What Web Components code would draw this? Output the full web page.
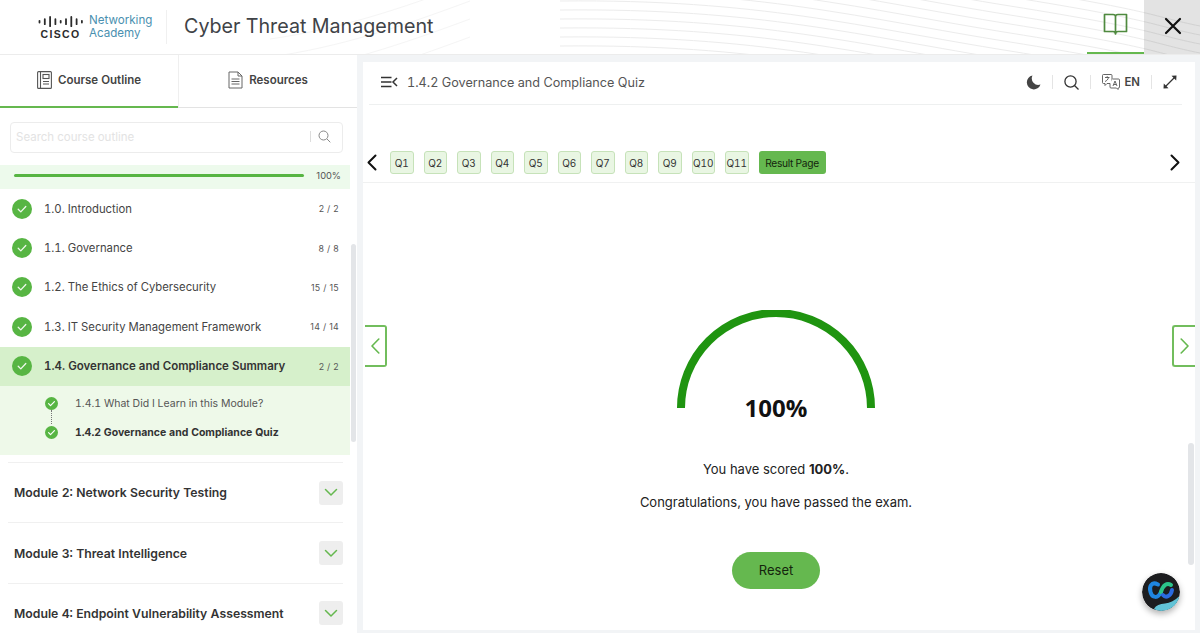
<!DOCTYPE html>
<html lang="en">
<head>
<meta charset="utf-8">
<title>Cyber Threat Management</title>
<style>
  html, body { margin: 0; height: 100%; overflow: hidden; }
  body { font-family: Inter, "Liberation Sans", sans-serif; font-variant-numeric: tabular-nums; background: #f2f4f6; color: #333; }
  .shell { display: flex; flex-direction: column; height: 633px; }
  .content { display: flex; flex: 1; min-height: 0; }
</style>
</head>
<body>
<div class="shell">
  <app-header title="Cyber Threat Management"></app-header>
  <div class="content">
    <course-sidebar>
      <outline-item label="1.0. Introduction" count="2 / 2"></outline-item>
      <outline-item label="1.1. Governance" count="8 / 8"></outline-item>
      <outline-item label="1.2. The Ethics of Cybersecurity" count="15 / 15"></outline-item>
      <outline-item label="1.3. IT Security Management Framework" count="14 / 14"></outline-item>
      <outline-item label="1.4. Governance and Compliance Summary" count="2 / 2" active></outline-item>
      <sub-items>
        <sub-item label="1.4.1 What Did I Learn in this Module?" link></sub-item>
        <sub-item label="1.4.2 Governance and Compliance Quiz" current></sub-item>
      </sub-items>
      <module-row label="Module 2: Network Security Testing"></module-row>
      <module-row label="Module 3: Threat Intelligence"></module-row>
      <module-row label="Module 4: Endpoint Vulnerability Assessment"></module-row>
    </course-sidebar>
    <quiz-panel heading="1.4.2 Governance and Compliance Quiz">
      <score-gauge value="100%"></score-gauge>
    </quiz-panel>
  </div>
</div>

<script>
  function shadow(el, html) {
    el.attachShadow({ mode: 'open' });
    el.shadowRoot.innerHTML = html;
  }

  const CHECK = `<path d="M6.2 10.3l2.6 2.6 5-5.4" fill="none" stroke="#fff" stroke-width="1.3" stroke-linecap="round" stroke-linejoin="round" opacity=".9"/>`;

  class AppHeader extends HTMLElement {
    connectedCallback() {
      let waves = '';
      let titleWaves = '';
      for (let i = 0; i < 18; i++) {
        const y = -40 + i * 9;
        waves += `<path d="M560 ${y - 22} C760 ${y - 24} 860 ${y + 4} 1010 ${y + 28} S1150 ${y + 56} 1200 ${y + 66}"/>`;
        if (i % 2) titleWaves += `<path d="M270 ${y + 70} C340 ${y + 60} 400 ${y + 40} 470 ${y + 14}"/>`;
      }
      shadow(this, `
        <style>
          :host { display: block; flex: none; height: 54px; background: #fff; border-bottom: 1px solid #ececec; position: relative; overflow: hidden; }
          .bg { position: absolute; inset: 0; }
          .bar { position: relative; display: flex; align-items: center; height: 54px; }
          .logo { display: flex; align-items: center; gap: 6px; margin-left: 38px; width: 128px; height: 34px; border-right: 1px solid #f0f0f0; }
          .cisco { display: flex; flex-direction: column; align-items: center; width: 45px; }
          .cisco b { font: 700 10.5px/10px "Liberation Sans", sans-serif; letter-spacing: 1.3px; color: #2c2c2c; margin-top: 2px; text-transform: uppercase; }
          .academy { font-size: 11.6px; line-height: 13px; color: #4a90b0; margin-top: -1px; }
          h1 { margin: -2px 0 0 17px; font-size: 19.7px; font-weight: 400; color: #3f4347; flex: 1; white-space: nowrap; }
          .book { width: 57px; height: 54px; box-sizing: border-box; border-bottom: 2px solid #65b84f; display: flex; align-items: center; justify-content: center; padding-bottom: 3px; }
          .close { width: 56px; height: 54px; background: rgba(0,0,0,.11); display: flex; align-items: center; justify-content: center; padding: 0 0 2px 2px; box-sizing: border-box; }
        </style>
        <svg class="bg" width="1200" height="54" fill="none" stroke-width="1"><g stroke="#ececec">${waves}</g><g stroke="#f5f5f5">${titleWaves}</g></svg>
        <div class="bar">
          <div class="logo">
            <div class="cisco">
              <svg width="45" height="11" viewBox="0 0 45 11" stroke="#2c2c2c" stroke-width="1.8" stroke-linecap="round">
                <path d="M1.5 4.8v1.800M6.800 3.200v5M12.100 1v9.200M17.400 3.200v5M22.700 4.800v1.800M28 3.200v5M33.300 1v9.200M38.600 3.200v5M43.900 4.800v1.800"/>
              </svg>
              <b>cisco</b>
            </div>
            <div class="academy">Networking<br>Academy</div>
          </div>
          <h1>${this.getAttribute('title')}</h1>
          <div class="book">
            <svg width="25" height="23" viewBox="0 0 25 23" fill="none" stroke="#4f8a3f" stroke-width="1.7" stroke-linejoin="round">
              <path d="M1.500 1.500h8.500c1.400 0 2.500.8 2.500 2v17.500c0-1.400-1.100-2.500-2.500-2.500h-8.500zM23.500 1.500h-8.500c-1.400 0-2.500.8-2.500 2v17.500c0-1.400 1.100-2.500 2.500-2.500h8.500z"/>
            </svg>
          </div>
          <div class="close">
            <svg width="18" height="18" viewBox="0 0 18 18" stroke="#111" stroke-width="2.2" stroke-linecap="round"><path d="M2 2l14 14M16 2L2 16"/></svg>
          </div>
        </div>`);
    }
  }

  class CourseSidebar extends HTMLElement {
    connectedCallback() {
      shadow(this, `
        <style>
          :host { display: flex; flex-direction: column; flex: none; width: 357px; background: #fff; position: relative; overflow: hidden; }
          .tabs { display: flex; height: 53px; flex: none; border-bottom: 1px solid #e3e3e3; box-sizing: border-box; }
          .tab { flex: 1; display: flex; align-items: center; justify-content: center; gap: 6px; font-size: 11.5px; font-weight: 600; color: #444; box-sizing: border-box; padding-bottom: 2px; }
          .tab.on { border-bottom: 2px solid #65b84f; margin-bottom: -1px; padding-bottom: 1px; }
          .tab + .tab { border-left: 1px solid #efefef; }
          .search { flex: none; margin: 14px 14px 0 10px; height: 27px; border: 1px solid #ececec; border-radius: 4px; display: flex; align-items: center; padding: 0 11px 2px 5px; font-size: 11.5px; color: #e3e3e3; }
          .search span { flex: 1; }
          .search i { width: 1px; height: 11px; background: #ddd; margin-right: 7px; }
          .progress { flex: none; margin: 12px 7px 0 0; height: 24px; box-sizing: border-box; padding: 0 9px 3px 14px; background: #edfaec; display: flex; align-items: center; font-size: 9.3px; font-variant-numeric: normal; color: #555; gap: 12px; }
          .progress i { flex: 1; height: 3px; border-radius: 2px; background: #57b543; }
          .thumb { position: absolute; left: 351px; top: 189px; width: 5px; height: 198px; background: #e3e5e8; border-radius: 3px; }
        </style>
        <div class="tabs">
          <div class="tab on">
            <svg width="15" height="18" viewBox="0 0 15 18" fill="none" stroke="#555" stroke-width="1.1"><rect x=".6" y=".6" width="13.8" height="16.8" rx="1"/><path d="M3.500.6v16.800"/><rect x="6" y="3.500" width="6" height="4"/><path d="M6 10.500h6M6 13h6"/></svg>
            Course Outline
          </div>
          <div class="tab">
            <svg width="15" height="18" viewBox="0 0 15 18" fill="none" stroke="#666" stroke-width="1"><path d="M1 1h9l4 4v12H1zM10 1v4h4M3.500 8h8M3.500 10.500h8M3.500 13h8"/></svg>
            Resources
          </div>
        </div>
        <div class="search">
          <span>Search course outline</span><i></i>
          <svg width="13" height="13" viewBox="0 0 13 13" fill="none" stroke="#888" stroke-width="1"><circle cx="5.500" cy="5.500" r="4.500"/><path d="M9 9l3.300 3.300"/></svg>
        </div>
        <div class="progress"><i></i>100%</div>
        <slot></slot>
        <div class="thumb"></div>`);
    }
  }

  class OutlineItem extends HTMLElement {
    connectedCallback() {
      shadow(this, `
        <style>
          :host { display: flex; align-items: center; flex: none; height: 39.4px; margin-right: 7px; padding: 0 11px 0 12px; color: #444; font-size: 11.3px; box-sizing: border-box; }
          :host([active]) { background: #d6f0cb; font-weight: 600; font-size: 11.5px; color: #333; }
          svg { flex: none; margin-right: 12px; }
          .label { flex: 1; white-space: nowrap; }
          .count { font-size: 8.8px; color: #555; font-weight: 400; letter-spacing: .3px; font-variant-numeric: normal; }
        </style>
        <svg width="20" height="20" viewBox="0 0 20 20"><circle cx="10" cy="10" r="10" fill="#57b543"/>${CHECK}</svg>
        <span class="label">${this.getAttribute('label')}</span>
        <span class="count">${this.getAttribute('count')}</span>`);
    }
  }

  class SubItems extends HTMLElement {
    connectedCallback() {
      shadow(this, `
        <style>
          :host { display: block; flex: none; height: 69px; margin-right: 7px; padding-top: 3px; background: #eef9e9; box-sizing: border-box; }
        </style>
        <slot></slot>`);
    }
  }

  class SubItem extends HTMLElement {
    connectedCallback() {
      const link = this.hasAttribute('link');
      shadow(this, `
        <style>
          :host { display: flex; align-items: center; height: 29px; padding-left: 45px; font-size: 10.5px; color: #555; position: relative; }
          :host([current]) { font-weight: 700; color: #333; }
          svg { flex: none; margin-right: 17px; }
          .dots { position: absolute; left: 51px; top: 21px; height: 14px; border-left: 1px dotted #777; }
        </style>
        <svg width="13" height="13" viewBox="0 0 20 20"><circle cx="10" cy="10" r="10" fill="#57b543"/><path d="M5.500 10.300l3 3 6-6.300" fill="none" stroke="#fff" stroke-width="1.8" stroke-linecap="round" stroke-linejoin="round"/></svg>
        <span>${this.getAttribute('label')}</span>
        ${link ? '<i class="dots"></i>' : ''}`);
    }
  }

  class ModuleRow extends HTMLElement {
    connectedCallback() {
      shadow(this, `
        <style>
          :host { display: flex; align-items: center; flex: none; height: 60.4px; margin: 0 14px 0 8px; padding: 0 0 0 6px; border-top: 1px solid #f0f0f0; box-sizing: border-box; font-size: 12.25px; font-weight: 600; color: #333; }
          :host(:first-of-type) { margin-top: 7px; }
          span { flex: 1; white-space: nowrap; }
          .chev { width: 24px; height: 24px; background: #eee; border-radius: 3px; display: flex; align-items: center; justify-content: center; }
        </style>
        <span>${this.getAttribute('label')}</span>
        <div class="chev"><svg width="14" height="9" viewBox="0 0 14 9" fill="none" stroke="#65b84f" stroke-width="1.5" stroke-linecap="round" stroke-linejoin="round"><path d="M1.500 1.500L7 7l5.500-5.500"/></svg></div>`);
    }
  }

  class QuizPanel extends HTMLElement {
    connectedCallback() {
      let chips = '';
      for (let i = 1; i <= 11; i++) chips += `<span class="chip">Q${i}</span>`;
      shadow(this, `
        <style>
          :host { display: flex; flex-direction: column; flex: 1; min-width: 0; margin: 7px 5px 3px 6px; background: #fff; position: relative; overflow: hidden; }
          .head { flex: none; height: 40px; margin: 0 13px 0 6px; border-bottom: 1px solid #eef0f0; display: flex; align-items: center; padding: 0 0 2px 12px; }
          .title { flex: 1; margin-left: 9px; font-size: 12.65px; color: #555; white-space: nowrap; }
          .tools { display: flex; align-items: center; margin-right: 5px; }
          .tools i { width: 1px; height: 14px; background: #e4e4e4; margin: 0 11px; }
          .lang { font-size: 11.4px; font-weight: 600; color: #444; margin-left: 4px; }
          .nav { flex: none; height: 23px; margin-top: 46px; padding: 0 15px 8px 4px; display: flex; align-items: center; gap: 10px; border-bottom: 1px solid #f0f1f1; }
          .nav svg { flex: none; }
          .nav svg:first-child { margin-right: 3px; }
          .chip { flex: none; width: 23.5px; height: 23px; box-sizing: border-box; display: flex; align-items: center; justify-content: center; background: #e9f6e3; border: 1px solid #c6e2b9; border-radius: 3px; font-size: 10px; color: #333; }
          .result { flex: none; width: 67px; height: 23px; display: flex; align-items: center; justify-content: center; background: #65b84f; border-radius: 3px; font-size: 10.2px; letter-spacing: -.3px; color: #14240d; white-space: nowrap; }
          .spacer { flex: 1; }
          .body { flex: 1; min-height: 0; display: flex; flex-direction: column; align-items: center; padding: 127px 6px 0 0; font-size: 13px; font-variant-numeric: normal; color: #222; }
          p { margin: 0; white-space: nowrap; }
          b { font-weight: 700; }
          .score { margin-top: 53px; }
          .pass { margin-top: 17px; }
          button { all: unset; margin-top: 42px; width: 88px; height: 37px; border-radius: 19px; background: #65b84f; text-align: center; line-height: 37px; font-size: 13px; color: #14240d; }
          .side { position: absolute; top: 263px; width: 23px; height: 42px; box-sizing: border-box; border: 2px solid #72bd5d; border-radius: 3px; display: flex; align-items: center; justify-content: center; background: #fff; }
          .side.l { left: 2px; width: 22px; border-left: 0; border-radius: 0 3px 3px 0; }
          .side.r { right: 0; border-right: 0; border-radius: 3px 0 0 3px; }
          .thumb { position: absolute; right: 1px; top: 381px; width: 6px; height: 122px; background: #e3e5e8; border-radius: 3px; }
          .webex { position: absolute; left: 779px; top: 511px; width: 38px; height: 38px; border-radius: 50%; box-shadow: 0 3px 6px rgba(0,0,0,.3); }
        </style>
        <div class="head">
          <svg width="17" height="12" viewBox="0 0 17 12" fill="none" stroke="#333" stroke-width="1.5"><path d="M0 1.500h10.500M0 6h10.500M0 10.500h10.500M16 2l-4 4 4 4"/></svg>
          <span class="title">${this.getAttribute('heading')}</span>
          <div class="tools">
            <svg width="15" height="15" viewBox="0 0 15 15"><path d="M6.500.5A7 7 0 1 0 14.500 9.500 6.500 6.500 0 0 1 6.500.5z" fill="#444"/></svg>
            <i></i>
            <svg width="15" height="15" viewBox="0 0 15 15" fill="none" stroke="#333" stroke-width="1.3"><circle cx="6.500" cy="6.500" r="5.600"/><path d="M10.500 10.500l4 4"/></svg>
            <i></i>
            <svg width="18" height="16" viewBox="0 0 18 16" fill="none" stroke="#555" stroke-width=".9"><path d="M1.500.5h7.500a1 1 0 0 1 1 1v7a1 1 0 0 1-1 1H5l-2 2v-2H1.500a1 1 0 0 1-1-1v-7a1 1 0 0 1 1-1z"/><path d="M3 3.500h4.500M5.200 2.200v1.300M6.500 3.500c-.4 2-2 3.500-3.500 4"/><path d="M10.500 5h6a1 1 0 0 1 1 1v7a1 1 0 0 1-1 1H16v1.500L14.500 14H9a1 1 0 0 1-1-1V9.500" fill="#fff"/><path d="M11 12l2-5 2 5M11.800 10.500h2.400"/></svg>
            <span class="lang">EN</span>
            <i></i>
            <svg width="14" height="14" viewBox="0 0 14 14" fill="none" stroke="#333" stroke-width="1.2"><path d="M2.500 11.500l9-9"/><path d="M13.500.5L8.500.8 13.200 5.500zM.5 13.500l5-.3L.8 8.500z" fill="#333" stroke="none"/></svg>
          </div>
        </div>
        <div class="nav">
          <svg width="10" height="17" viewBox="0 0 10 17" fill="none" stroke="#111" stroke-width="2" stroke-linecap="round" stroke-linejoin="round"><path d="M8.500 1.500l-7 7 7 7"/></svg>
          ${chips}
          <span class="result">Result Page</span>
          <span class="spacer"></span>
          <svg width="10" height="17" viewBox="0 0 10 17" fill="none" stroke="#111" stroke-width="2" stroke-linecap="round" stroke-linejoin="round"><path d="M1.500 1.500l7 7-7 7"/></svg>
        </div>
        <div class="body">
          <slot></slot>
          <p class="score">You have scored <b>100%</b>.</p>
          <p class="pass">Congratulations, you have passed the exam.</p>
          <button>Reset</button>
        </div>
        <div class="side l"><svg width="9" height="16" viewBox="0 0 9 16" fill="none" stroke="#65b84f" stroke-width="1.6" stroke-linecap="round" stroke-linejoin="round"><path d="M7.800 1L1 8l6.800 7"/></svg></div>
        <div class="side r"><svg width="9" height="16" viewBox="0 0 9 16" fill="none" stroke="#65b84f" stroke-width="1.6" stroke-linecap="round" stroke-linejoin="round"><path d="M1.200 1L8 8l-6.800 7"/></svg></div>
        <div class="thumb"></div>
        <svg class="webex" viewBox="0 0 38 38">
          <circle cx="19" cy="19" r="19" fill="#1c1d1f"/>
          <path d="M12 36c2-4 6-5 11-5.500s10-3 14.500-7.500c-1.500 8-8 15-18.500 15-2.500 0-5-.7-7-2z" fill="#62c3d6"/>
          <path d="M16 11.500C9 8 7 14 8.500 19c1.500 6 7.500 7 10.500 0" fill="none" stroke="#1f86e0" stroke-width="4" stroke-linecap="round"/>
          <path d="M19 19c2-7 6-9.500 10-7" fill="none" stroke="#2bc48a" stroke-width="4" stroke-linecap="round"/>
          <path d="M30 17c-1 6-6 8.500-9 5" fill="none" stroke="#2a6be0" stroke-width="4" stroke-linecap="round"/>
        </svg>`);
    }
  }

  class ScoreGauge extends HTMLElement {
    connectedCallback() {
      shadow(this, `
        <style>
          :host { display: grid; justify-items: center; width: 198px; }
          svg { display: block; grid-area: 1 / 1; }
          .val { grid-area: 1 / 1; align-self: end; margin-bottom: -12px; font: 700 24px/24px "Open Sans", Inter, sans-serif; color: #111; }
        </style>
        <svg width="198" height="98" viewBox="0 0 198 98" fill="none"><path d="M4 98A95 95 0 0 1 194 98" stroke="#1f9410" stroke-width="8"/></svg>
        <div class="val">${this.getAttribute('value')}</div>`);
    }
  }

  customElements.define('app-header', AppHeader);
  customElements.define('course-sidebar', CourseSidebar);
  customElements.define('outline-item', OutlineItem);
  customElements.define('sub-items', SubItems);
  customElements.define('sub-item', SubItem);
  customElements.define('module-row', ModuleRow);
  customElements.define('quiz-panel', QuizPanel);
  customElements.define('score-gauge', ScoreGauge);
</script>
</body>
</html>
